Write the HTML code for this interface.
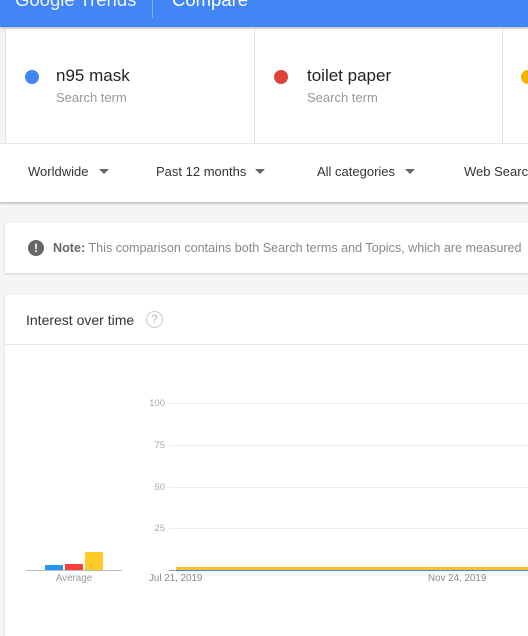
<!DOCTYPE html>
<html><head><style>
body{margin:0;width:528px;height:636px;overflow:hidden;background:#f5f5f5;font-family:"Liberation Sans",sans-serif;position:relative}
.a{position:absolute}
</style></head><body>
<div class="a" style="left:0;top:0;width:528px;height:27px;background:#4285f4;box-shadow:0 1px 3px rgba(0,0,0,.3)"></div>
<div class="a" style="left:15px;top:-11px;color:#fff;font-size:18.5px;opacity:.9">Google Trends</div>
<div class="a" style="left:152px;top:0;width:1px;height:18px;background:rgba(255,255,255,.35)"></div>
<div class="a" style="left:172px;top:-11px;color:#fff;font-size:18.5px">Compare</div>

<div class="a" style="left:5px;top:29px;width:523px;height:114px;background:#fff;border-left:1px solid #e0e0e0"></div>
<div class="a" style="left:254px;top:29px;width:1px;height:114px;background:#e0e0e0"></div>
<div class="a" style="left:502px;top:29px;width:1px;height:114px;background:#e0e0e0"></div>
<div class="a" style="left:25px;top:70px;width:14px;height:14px;border-radius:50%;background:#4285f4"></div>
<div class="a" style="left:56px;top:66px;font-size:17px;color:#222">n95 mask</div>
<div class="a" style="left:56px;top:90px;font-size:13px;color:#999">Search term</div>
<div class="a" style="left:274px;top:70px;width:14px;height:14px;border-radius:50%;background:#db4437"></div>
<div class="a" style="left:307px;top:66px;font-size:17px;color:#222">toilet paper</div>
<div class="a" style="left:307px;top:90px;font-size:13px;color:#999">Search term</div>
<div class="a" style="left:521px;top:70px;width:14px;height:14px;border-radius:50%;background:#f4b400"></div>

<div class="a" style="left:0;top:143px;width:528px;height:58px;background:#fff;border-top:1px solid #e8e8e8;box-shadow:0 2px 2px rgba(0,0,0,.2)"></div>
<div class="a" style="left:28px;top:164px;font-size:13px;color:#333">Worldwide</div>
<div class="a" style="left:99px;top:169px;border:5px solid transparent;border-top:5px solid #666;border-bottom:0"></div>
<div class="a" style="left:156px;top:164px;font-size:13px;color:#333">Past 12 months</div>
<div class="a" style="left:255px;top:169px;border:5px solid transparent;border-top:5px solid #666;border-bottom:0"></div>
<div class="a" style="left:317px;top:164px;font-size:13px;color:#333">All categories</div>
<div class="a" style="left:405px;top:169px;border:5px solid transparent;border-top:5px solid #666;border-bottom:0"></div>
<div class="a" style="left:464px;top:164px;font-size:13px;color:#333;white-space:nowrap">Web Search</div>

<div class="a" style="left:5px;top:223px;width:523px;height:50px;background:#fff;box-shadow:0 1px 2px rgba(0,0,0,.15)"></div>
<div class="a" style="left:28px;top:240px;width:16px;height:16px;border-radius:50%;background:#666;color:#fff;font-size:12px;font-weight:bold;text-align:center;line-height:16px">!</div>
<div class="a" style="left:53px;top:241px;font-size:12.6px;color:#888;white-space:nowrap"><b style="color:#666">Note:</b> This comparison contains both Search terms and Topics, which are measured</div>

<div class="a" style="left:5px;top:295px;width:523px;height:341px;background:#fff;box-shadow:0 1px 2px rgba(0,0,0,.15)"></div>
<div class="a" style="left:26px;top:312px;font-size:14px;color:#333">Interest over time</div>
<div class="a" style="left:146px;top:311px;width:15px;height:15px;border:1.5px solid #ccc;border-radius:50%;color:#bbb;font-size:12px;text-align:center;line-height:15px">?</div>
<div class="a" style="left:5px;top:344px;width:523px;height:1px;background:#e8e8e8"></div>

<div class="a" style="left:169px;top:403px;width:359px;height:1px;background:#ececec"></div>
<div class="a" style="left:169px;top:445px;width:359px;height:1px;background:#ececec"></div>
<div class="a" style="left:169px;top:487px;width:359px;height:1px;background:#ececec"></div>
<div class="a" style="left:169px;top:528px;width:359px;height:1px;background:#ececec"></div>
<div class="a" style="left:120px;top:398px;width:45px;text-align:right;font-size:9.5px;color:#aaa">100</div>
<div class="a" style="left:120px;top:440px;width:45px;text-align:right;font-size:9.5px;color:#aaa">75</div>
<div class="a" style="left:120px;top:482px;width:45px;text-align:right;font-size:9.5px;color:#aaa">50</div>
<div class="a" style="left:120px;top:523px;width:45px;text-align:right;font-size:9.5px;color:#aaa">25</div>
<div class="a" style="left:169px;top:570px;width:359px;height:1px;background:#999"></div>
<div class="a" style="left:176px;top:567px;width:352px;height:3px;background:#fbc02d"></div>
<div class="a" style="left:176px;top:570px;width:352px;height:1px;background:#4285f4"></div>
<div class="a" style="left:149px;top:573px;font-size:9.8px;color:#888">Jul 21, 2019</div>
<div class="a" style="left:428px;top:573px;font-size:9.8px;color:#888">Nov 24, 2019</div>

<div class="a" style="left:26px;top:570px;width:96px;height:1px;background:#bbb"></div>
<div class="a" style="left:45px;top:565px;width:18px;height:5px;background:#2196f3"></div>
<div class="a" style="left:65px;top:564px;width:18px;height:6px;background:#f44336"></div>
<div class="a" style="left:85px;top:552px;width:18px;height:18px;background:#ffca28"></div>
<div class="a" style="left:44px;top:573px;width:60px;text-align:center;font-size:9.8px;color:#999">Average</div>
</body></html>
